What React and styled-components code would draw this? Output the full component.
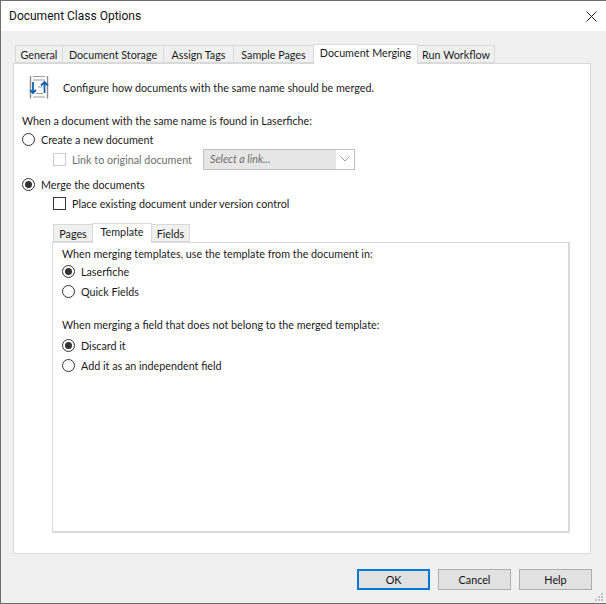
import styled, { createGlobalStyle } from "styled-components";

const GlobalStyle = createGlobalStyle`
	html, body {
		margin: 0;
		padding: 0;
		background: #f0f0f0;
	}
	* {
		box-sizing: border-box;
	}
`;

const Dialog = styled.div`
	position: relative;
	width: 606px;
	height: 604px;
	display: flex;
	flex-direction: column;
	background: #f0f0f0;
	border: 1px solid #6d6d6d;
	border-right: none;
	font-family: Lato, "Liberation Sans", sans-serif;
	font-size: 10.75px;
	color: #1a1a1a;
	overflow: hidden;
`;

const TitleBar = styled.div`
	height: 30px;
	flex: none;
	display: flex;
	align-items: center;
	justify-content: space-between;
	padding: 0 9px 0 8px;
	background: #fff;
	font-family: Roboto, "Liberation Sans", sans-serif;
	font-size: 12px;
	color: #111;
`;

const CloseIcon = styled.svg`
	width: 11px;
	height: 11px;
	display: block;
`;

const Body = styled.div`
	flex: 1;
	display: flex;
	flex-direction: column;
	padding: 12px 15px 0 12px;
`;

const TabStrip = styled.div`
	display: flex;
	align-items: flex-end;
	height: ${(p) => p.$height}px;
	padding-left: ${(p) => p.$inset}px;
	flex: none;
`;

const Tab = styled.div`
	width: ${(p) => p.$width}px;
	height: ${(p) => (p.$active ? p.$tall : p.$tall - 2)}px;
	margin-left: ${(p) => (p.$active ? -1 : 0)}px;
	margin-bottom: ${(p) => (p.$active ? -1 : 0)}px;
	position: relative;
	z-index: ${(p) => (p.$active ? 2 : 1)};
	display: flex;
	align-items: center;
	justify-content: center;
	padding-bottom: ${(p) => (p.$active ? 4 : 0)}px;
	background: ${(p) => (p.$active ? "#fff" : "#f0f0f0")};
	border: 1px solid #d9d9d9;
	border-bottom: ${(p) => (p.$active ? "none" : "1px solid #d9d9d9")};
	border-left-width: ${(p) => (p.$first || p.$active ? 1 : 0)}px;
	white-space: nowrap;
`;

const Panel = styled.div`
	width: 578px;
	height: 491px;
	flex: none;
	background: #fff;
	border: 1px solid #d9d9d9;
	padding: 10px 8px 0 8px;
`;

const Intro = styled.div`
	display: flex;
	align-items: center;
	gap: 14px;
	height: 27px;
	padding-left: 7px;
`;

const IntroIcon = styled.svg`
	width: 20px;
	height: 26px;
	display: block;
	flex: none;
`;

const Label = styled.div`
	height: 20px;
	line-height: 20px;
	margin-top: ${(p) => p.$top || 0}px;
	white-space: nowrap;
`;

const Option = styled.label`
	display: flex;
	align-items: center;
	gap: ${(p) => p.$gap || 6}px;
	height: 20px;
	margin-top: ${(p) => p.$top || 0}px;
	margin-left: ${(p) => p.$indent || 0}px;
	white-space: nowrap;
	color: ${(p) => (p.$disabled ? "#6d6d6d" : "inherit")};
`;

const OptionText = styled.span`
	width: ${(p) => (p.$width ? `${p.$width}px` : "auto")};
`;

const Radio = styled.span`
	width: 13px;
	height: 13px;
	flex: none;
	border-radius: 50%;
	border: 1px solid #333;
	background: #fff;
	display: flex;
	align-items: center;
	justify-content: center;

	&::after {
		content: "";
		width: 7px;
		height: 7px;
		border-radius: 50%;
		background: ${(p) => (p.$checked ? "#333" : "transparent")};
	}
`;

const Check = styled.span`
	width: 13px;
	height: 13px;
	flex: none;
	background: #fff;
	border: 1px solid ${(p) => (p.$disabled ? "#cccccc" : "#333")};
`;

const Select = styled.div`
	width: 152px;
	height: 21px;
	display: flex;
	border: 1px solid #bfbfbf;
	background: #fff;
`;

const SelectValue = styled.div`
	flex: 1;
	background: #e6e6e6;
	padding-left: 6px;
	line-height: 18px;
	font-style: italic;
	color: #6d6d6d;
`;

const SelectArrow = styled.div`
	width: 18px;
	display: flex;
	align-items: center;
	justify-content: center;
`;

const InnerWrap = styled.div`
	margin: 9px 0 0 30px;
`;

const InnerPanel = styled.div`
	width: 518px;
	height: 291px;
	border: 1px solid #d9d9d9;
	border-bottom-width: 2px;
	border-right-width: 2px;
	padding: 1px 0 0 9px;
`;

const Footer = styled.div`
	display: flex;
	justify-content: flex-end;
	gap: 8px;
	padding: 15px 0 0;
	margin-right: -1px;
`;

const Button = styled.button`
	width: 73px;
	height: 21px;
	padding: 0;
	font: inherit;
	color: #111;
	background: #e1e1e1;
	border: ${(p) => (p.$primary ? "2px solid #0078d7" : "1px solid #adadad")};
`;

const Grip = styled.svg`
	position: absolute;
	right: 2px;
	bottom: 1px;
	width: 10px;
	height: 10px;
`;

const tabs = [
	{ name: "General", width: 48, first: true },
	{ name: "Document Storage", width: 101 },
	{ name: "Assign Tags", width: 70 },
	{ name: "Sample Pages", width: 80 },
	{ name: "Document Merging", width: 105, active: true },
	{ name: "Run Workflow", width: 77 },
];

const innerTabs = [
	{ name: "Pages", width: 40, first: true },
	{ name: "Template", width: 60, active: true },
	{ name: "Fields", width: 38 },
];

const MergeIcon = () => (
	<IntroIcon viewBox="0 0 20 26" fill="none">
		<path d="M1.5 1v22.5M18.5 1v22.5" stroke="#8c8c8c" strokeWidth="1.4" />
		<path
			d="M4 1.5h12M4 5h12M9 12h4M7 18.5h7M4 22h12"
			stroke="#9a9a9a"
			strokeWidth="1.2"
		/>
		<path
			d="M4 7v11M1 15L4 18l3-3M15.5 18V7M12 10.5l3.5-3.5 3.5 3.5"
			stroke="#0b62b5"
			strokeWidth="1.8"
		/>
	</IntroIcon>
);

const App = () => {
	return (
		<Dialog>
			<GlobalStyle />
			<TitleBar>
				<span>Document Class Options</span>
				<CloseIcon viewBox="0 0 11 11">
					<path d="M0.5 0.5l10 10M10.5 0.5l-10 10" stroke="#222" strokeWidth="1" />
				</CloseIcon>
			</TitleBar>
			<Body>
				<TabStrip $height={20} $inset={2}>
					{tabs.map(({ name, width, active, first }) => (
						<Tab key={name} $width={width} $active={active} $first={first} $tall={20}>
							{name}
						</Tab>
					))}
				</TabStrip>
				<Panel>
					<Intro>
						<MergeIcon />
						<span>Configure how documents with the same name should be merged.</span>
					</Intro>
					<Label $top={10}>When a document with the same name is found in Laserfiche:</Label>
					<Option $top={-2}>
						<Radio />
						Create a new document
					</Option>
					<Option $indent={31} $disabled>
						<Check $disabled />
						<OptionText $width={125}>Link to original document</OptionText>
						<Select>
							<SelectValue>Select a link...</SelectValue>
							<SelectArrow>
								<svg width="10" height="6" viewBox="0 0 10 6" fill="none">
									<path d="M0.5 0.5L5 5l4.5-4.5" stroke="#a0a0a0" />
								</svg>
							</SelectArrow>
						</Select>
					</Option>
					<Option $top={5}>
						<Radio $checked />
						Merge the documents
					</Option>
					<Option $indent={31} $top={-1}>
						<Check />
						Place existing document under version control
					</Option>
					<InnerWrap>
						<TabStrip $height={20} $inset={1}>
							{innerTabs.map(({ name, width, active, first }) => (
								<Tab key={name} $width={width} $active={active} $first={first} $tall={20}>
									{name}
								</Tab>
							))}
						</TabStrip>
						<InnerPanel>
							<Label>When merging templates, use the template from the document in:</Label>
							<Option $top={-3}>
								<Radio $checked />
								Laserfiche
							</Option>
							<Option>
								<Radio />
								Quick Fields
							</Option>
							<Label $top={14}>When merging a field that does not belong to the merged template:</Label>
							<Option>
								<Radio $checked />
								Discard it
							</Option>
							<Option>
								<Radio />
								Add it as an independent field
							</Option>
						</InnerPanel>
					</InnerWrap>
				</Panel>
				<Footer>
					<Button $primary>OK</Button>
					<Button>Cancel</Button>
					<Button>Help</Button>
				</Footer>
			</Body>
			<Grip viewBox="0 0 10 10">
				<path d="M7 1h2v2H7zM4 4h2v2H4zM7 4h2v2H7zM1 7h2v2H1zM4 7h2v2H4zM7 7h2v2H7z" fill="#c0c0c0" />
			</Grip>
		</Dialog>
	);
};

export default App;
